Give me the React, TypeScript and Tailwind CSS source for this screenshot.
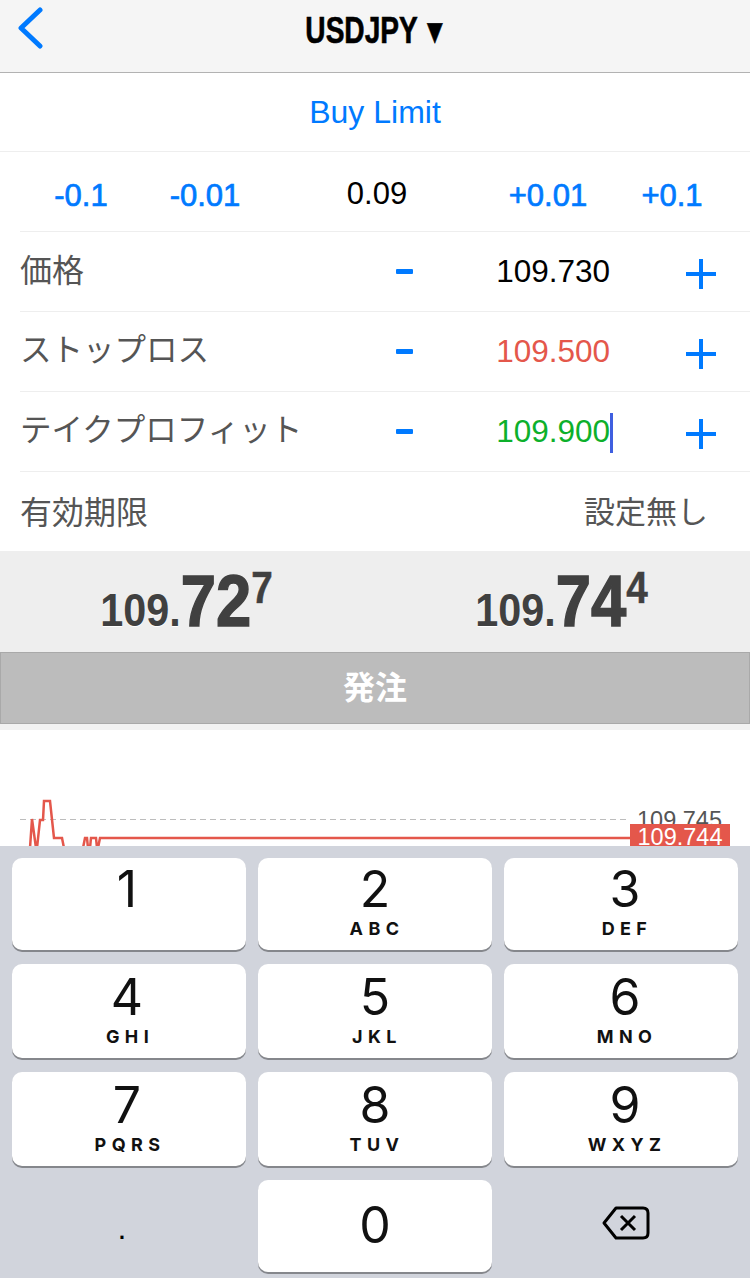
import * as React from "react";

const sans = { fontFamily: '"Liberation Sans", "Noto Sans CJK JP", sans-serif' };

function PlusMinusRow({ label, value, color, cursor, labelSize }: { label: string; value: string; color: string; cursor?: boolean; labelSize: string }) {
    return (
        <div className="ml-5 flex h-20 items-center border-b border-[#eeeeee]">
            <span className={`flex-1 pb-[2px] leading-none text-[#555555] ${labelSize}`}>{label}</span>
            <div className="mr-[76px] h-[5px] w-[17px] rounded-[1px] bg-[#007aff]" />
            <div className={`relative w-[121px] text-right text-[31.5px] leading-none ${color}`}>
                {value}
                {cursor && <div className="absolute top-[-3px] right-[-3px] h-10 w-[3px] bg-[#3f5fe0]" />}
            </div>
            <svg className="mt-1 ml-[76px] mr-[34px] h-[30px] w-[30px]" viewBox="0 0 30 30">
                <path d="M15 0V30M0 15H30" stroke="#007aff" strokeWidth="4" />
            </svg>
        </div>
    );
}

function Key({ digit, letters, tall, digitShift = "", letterShift = "" }: { digit: string; letters?: string; tall?: boolean; digitShift?: string; letterShift?: string }) {
    const top = letters || digit === "1";
    return (
        <div className={`flex flex-col items-center rounded-[10px] bg-white text-[#111111] shadow-[0_2px_0_#85878c] [font-family:Inter] ${tall ? "h-[94px]" : "h-[92px]"} ${top ? "" : "justify-center pb-[2px]"}`}>
            <span className={`text-[50px] leading-[54px] font-normal ${top ? (tall ? "mt-[6px]" : "mt-[4px]") : ""} ${digitShift}`}>{digit}</span>
            {letters && <span className={`mt-[3px] text-[18px] leading-[20px] font-bold tracking-[0.3em] ${letterShift}`}>{letters}</span>}
        </div>
    );
}

export default function App() {
    return (
        <div className="flex h-[1278px] w-full flex-col overflow-hidden bg-white" style={sans}>
            <header className="relative flex h-[73px] shrink-0 items-center justify-center border-b border-[#b2b2b2] bg-[#f5f5f5]">
                <svg className="absolute top-[7px] left-[17px] h-[42px] w-[26px]" viewBox="0 0 26 42">
                    <path d="M23 3L4 21L23 39" fill="none" stroke="#007aff" strokeWidth="5" strokeLinecap="round" strokeLinejoin="round" />
                </svg>
                <div className="-mt-[11px] -ml-[2px] flex scale-x-[0.78] items-center text-[36px] leading-none font-bold text-black [-webkit-text-stroke:0.6px_#000]">
                    USDJPY
                    <span className="ml-3 text-[26px] [font-family:'DejaVu_Sans']">▼</span>
                </div>
            </header>

            <div className="flex h-[79px] shrink-0 items-center justify-center border-b border-[#eeeeee] text-[32px] text-[#007aff]">Buy Limit</div>

            <div className="ml-5 flex h-20 shrink-0 items-center border-b border-[#eeeeee] text-[31px] leading-none text-[#007aff] [-webkit-text-stroke:0.7px_#007aff]">
                <span className="w-[122px] pt-2 text-center">-0.1</span>
                <span className="w-[126px] pt-2 text-center">-0.01</span>
                <span className="w-[218px] pt-1 text-center text-black [-webkit-text-stroke:0]">0.09</span>
                <span className="w-[124px] pt-2 text-center">+0.01</span>
                <span className="w-[124px] pt-2 text-center">+0.1</span>
            </div>

            <PlusMinusRow label="価格" value="109.730" color="text-black" labelSize="text-[32px]" />
            <PlusMinusRow label="ストップロス" value="109.500" color="text-[#e4574b]" labelSize="text-[31.5px]" />
            <PlusMinusRow label="テイクプロフィット" value="109.900" color="text-[#0db02b]" labelSize="text-[31.5px]" cursor />

            <div className="ml-5 flex h-[79px] shrink-0 items-center justify-between pt-[2px] pr-[42px] leading-none text-[#555555]">
                <span className="text-[32px]">有効期限</span>
                <span className="text-[31px]">設定無し</span>
            </div>

            <div className="grid h-[101px] shrink-0 grid-cols-2 bg-[#eeeeee] text-[#404040]">
                {[["72", "7"], ["74", "4"]].map(([big, small]) => (
                    <div key={big} className="-ml-[2px] flex scale-x-[0.88] items-start justify-center font-bold [text-shadow:0_1px_0_#fff]">
                        <span className="mt-[32px] text-[47px] leading-[54px]">109.</span>
                        <span className="mt-[8px] text-[72px] leading-[84px] [-webkit-text-stroke:1.5px_#404040]">{big}</span>
                        <span className="mt-[12px] text-[44px] leading-[50px] [-webkit-text-stroke:0.5px_#404040]">{small}</span>
                    </div>
                ))}
            </div>

            <div className="flex h-[72px] shrink-0 items-center justify-center border border-[#a9a9a9] bg-[#bcbcbc] text-[32px] font-bold text-white">発注</div>
            <div className="h-[6px] shrink-0 bg-[#f2f2f2]" />

            <div className="relative flex-1 overflow-hidden">
                <svg className="absolute inset-0 h-full w-full" viewBox="0 730 750 116">
                    <path d="M20 819.5H630" stroke="#bdbdbd" strokeWidth="1" strokeDasharray="6 4" fill="none" />
                    <path
                        d="M30 848L32 819L36 848M37 848L40 820H43L44 801H50L54 838H62L64 848M83 848L85 838H87L88 848M90 848L91 838H96L97 848M98 848L100 838H630"
                        stroke="#e4574b"
                        strokeWidth="2.5"
                        fill="none"
                    />
                </svg>
                <span className="absolute top-[79px] left-[637px] text-[23.5px] leading-none text-[#555555]">109.745</span>
                <div className="absolute top-[94px] left-[630px] h-10 w-[100px] bg-[#e4574b] pt-[2px] text-center text-[23.5px] leading-none text-white">109.744</div>
            </div>

            <div className="grid h-[432px] shrink-0 grid-cols-3 grid-rows-[92px_94px_94px_92px] content-start gap-x-3 gap-y-[14px] bg-[#d1d4dc] px-3 pt-3">
                <Key digit="1" digitShift="-ml-1" />
                <Key digit="2" letters="ABC" letterShift="ml-1" />
                <Key digit="3" letters="DEF" digitShift="ml-2" letterShift="ml-3" />
                <Key digit="4" letters="GHI" tall digitShift="-ml-1" letterShift="ml-[2px]" />
                <Key digit="5" letters="JKL" tall letterShift="ml-1" />
                <Key digit="6" letters="MNO" tall digitShift="ml-2" letterShift="ml-3" />
                <Key digit="7" letters="PQRS" tall digitShift="-ml-1" letterShift="ml-[2px]" />
                <Key digit="8" letters="TUV" tall letterShift="ml-1" />
                <Key digit="9" letters="WXYZ" tall digitShift="ml-2" letterShift="ml-3" />
                <div className="flex h-[92px] items-center justify-center pt-[4px] pr-[14px] text-[32px] leading-none text-black">.</div>
                <Key digit="0" />
                <div className="flex h-[92px] items-center justify-center pb-[6px] pl-[10px]">
                    <svg className="h-9 w-12" viewBox="0 0 48 36">
                        <path d="M14 3H41Q46 3 46 8V28Q46 33 41 33H14L2 18Z" fill="none" stroke="#000" strokeWidth="3" strokeLinejoin="round" />
                        <path d="M19 11L33 25M33 11L19 25" stroke="#000" strokeWidth="3" />
                    </svg>
                </div>
            </div>
        </div>
    );
}
